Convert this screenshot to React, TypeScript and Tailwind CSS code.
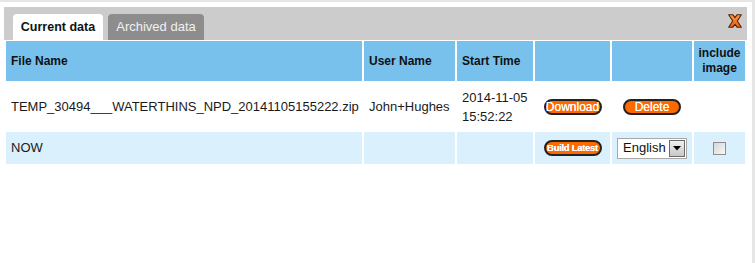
import React from "react";

const font = { fontFamily: '"Liberation Sans", Arial, sans-serif' };

function OrangeButton({ children, small }: { children: React.ReactNode; small?: boolean }) {
  return (
    <div
      className={
        "flex h-[16px] w-[58px] items-center justify-center rounded-[8px] border-2 border-[#222] bg-[#ff6a00] leading-none text-white [text-shadow:0_0_0.4px_#fff] " +
        (small ? "text-[9.5px] font-bold tracking-[-0.3px]" : "text-[12px]")
      }
    >
      {children}
    </div>
  );
}

function CloseIcon() {
  return (
    <svg width="14" height="14" viewBox="0 0 14 14">
      <defs>
        <linearGradient id="xg" x1="0" y1="0" x2="0" y2="1">
          <stop offset="0" stopColor="#ff9a4a" />
          <stop offset="1" stopColor="#e85a10" />
        </linearGradient>
      </defs>
      <polygon
        points="0.7,0.7 4.8,0.7 7,3.6 9.2,0.7 13.3,0.7 9.3,7 13.3,13.3 9.2,13.3 7,10.4 4.8,13.3 0.7,13.3 4.7,7"
        fill="url(#xg)"
        stroke="#5a2300"
        strokeWidth="1.1"
        strokeLinejoin="round"
      />
    </svg>
  );
}

function Select() {
  return (
    <div className="flex h-[21px] w-[70px] items-stretch border border-[#a8a8a8] bg-white">
      <div className="flex flex-1 items-center pl-[5px] text-[13px] text-[#111]">English</div>
      <div className="m-[1px] flex w-[16px] items-center justify-center border border-[#6b6b6b] bg-gradient-to-b from-[#f0f0f0] to-[#c8c8c8]">
        <svg width="8" height="5" viewBox="0 0 8 5">
          <polygon points="0,0 8,0 4,4.5" fill="#000" />
        </svg>
      </div>
    </div>
  );
}

export default function App() {
  const headCell = "flex items-center bg-[#79c1ed] px-[5px] text-[12px] font-bold text-[#111]";
  const row2 = "flex items-center bg-[#dbf0fd] px-[5px] text-[13px] text-[#1a1a1a]";
  return (
    <div
      className="h-[263px] w-[755px] overflow-hidden border-t-2 border-r-[3px] border-[#e6e6e6] bg-white"
      style={font}
    >
      <div className="ml-[4px] mr-[5px] mt-[5px]">
        <div className="flex h-[33px] items-end justify-between bg-[#cccccc] pl-[9px] pr-[5px]">
          <div className="flex items-end gap-[5px]">
            <div className="flex h-[26px] w-[90px] items-center justify-center rounded-t-[4px] bg-white text-[12.5px] font-bold text-[#111]">
              Current data
            </div>
            <div className="flex h-[26px] w-[96px] items-center justify-center rounded-t-[4px] bg-[#8d8d8d] text-[13px] text-[#f0f0f0]">
              Archived data
            </div>
          </div>
          <div className="mb-[12px]">
            <CloseIcon />
          </div>
        </div>
        <div className="mt-[1px] grid grid-cols-[356px_91px_76px_75px_80px_51px] grid-rows-[40px_47px_32px] gap-[2px] px-[2px]">
          <div className={headCell}>File Name</div>
          <div className={headCell}>User Name</div>
          <div className={headCell}>Start Time</div>
          <div className={headCell}></div>
          <div className={headCell}></div>
          <div className={headCell + " justify-center text-center leading-[15px]"}>
            include
            <br />
            image
          </div>

          <div className="flex items-center px-[5px] text-[13px] text-[#1a1a1a]">
            TEMP_30494___WATERTHINS_NPD_20141105155222.zip
          </div>
          <div className="flex items-center px-[5px] text-[13px] text-[#1a1a1a]">John+Hughes</div>
          <div className="flex items-center px-[5px] text-[13px] leading-[19px] text-[#1a1a1a]">
            <div>
              2014-11-05
              <br />
              15:52:22
            </div>
          </div>
          <div className="flex items-center justify-center">
            <OrangeButton>Download</OrangeButton>
          </div>
          <div className="flex items-center justify-center">
            <OrangeButton>Delete</OrangeButton>
          </div>
          <div></div>

          <div className={row2}>NOW</div>
          <div className={row2}></div>
          <div className={row2}></div>
          <div className={row2 + " justify-center px-0"}>
            <OrangeButton small>Build Latest</OrangeButton>
          </div>
          <div className={row2 + " justify-center px-0"}>
            <Select />
          </div>
          <div className={row2 + " justify-center px-0"}>
            <div className="h-[13px] w-[13px] border border-[#8e8e8e] bg-gradient-to-br from-[#d6d6d6] to-[#f8f8f8]"></div>
          </div>
        </div>
      </div>
    </div>
  );
}
